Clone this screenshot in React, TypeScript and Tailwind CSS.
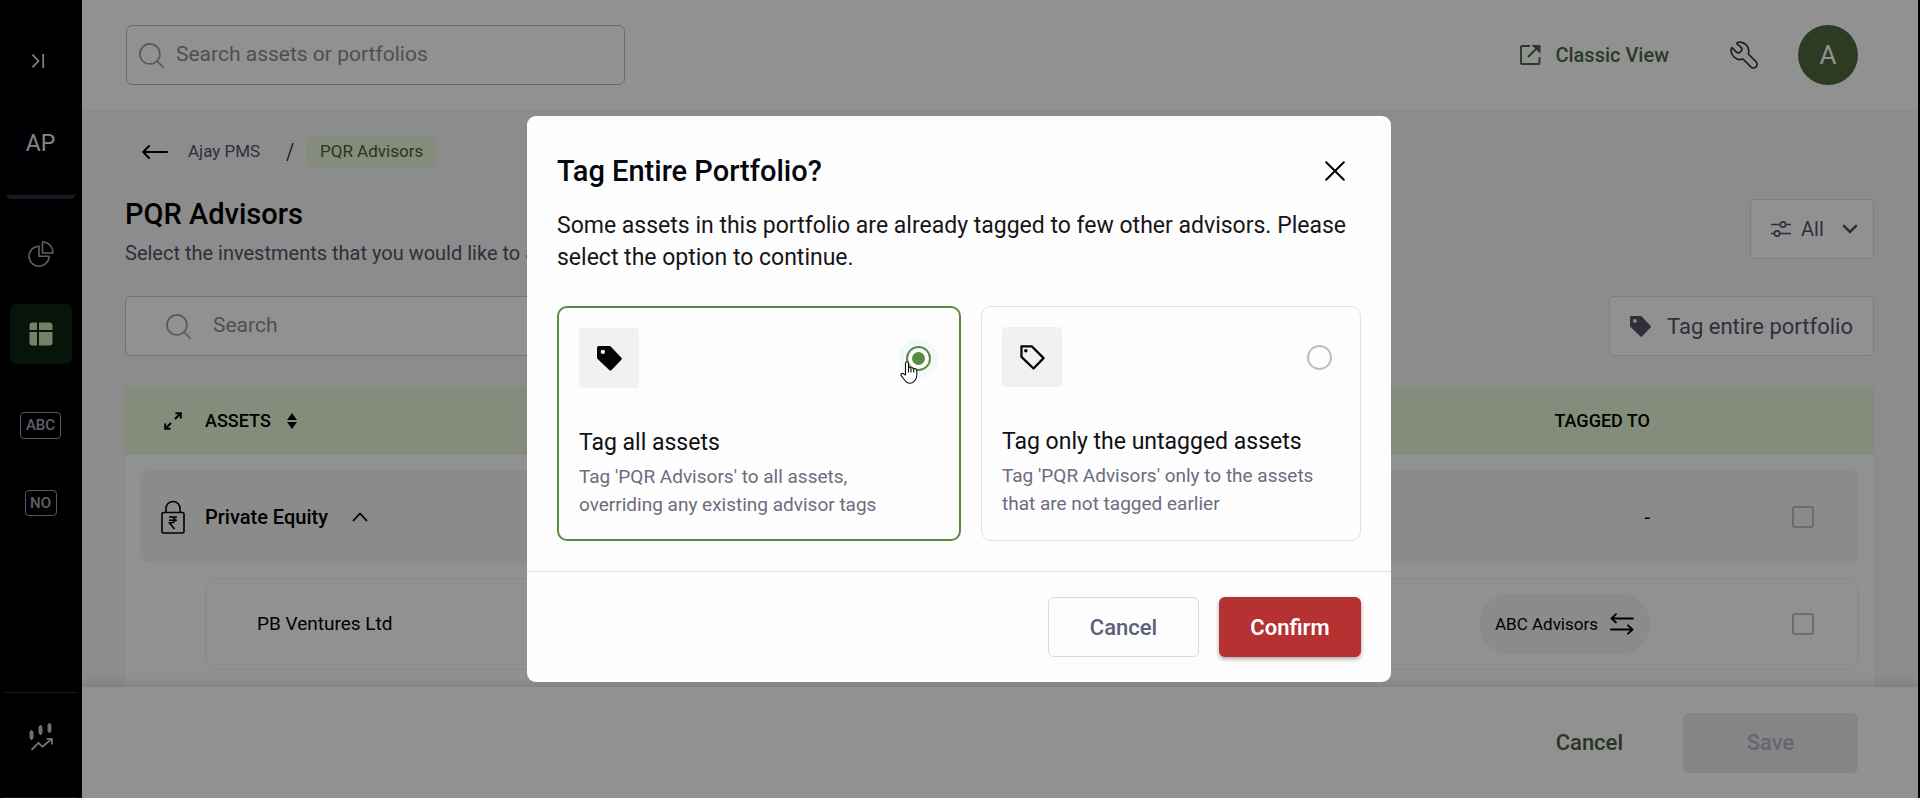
import React, { useState } from 'react';

type IconProps = { className?: string };

const SearchIcon: React.FC<IconProps> = ({ className }) => (
  <svg viewBox="0 0 24 24" className={className} fill="none" stroke="currentColor" strokeWidth="1.6" strokeLinecap="round">
    <circle cx="10.5" cy="10.5" r="9.6" />
    <path d="M17.5 17.5 23.2 23.2" />
  </svg>
);

const TagIcon: React.FC<IconProps & { filled?: boolean }> = ({ className, filled }) =>
  filled ? (
    <svg viewBox="0 0 24 24" className={className} fill="currentColor" fillRule="evenodd">
      <path d="M1.6 0H12q.8 0 1.4.6L23.4 11.2q.9 1 0 2L13.8 23.3q-.9.9-1.8 0L.6 12.5Q0 11.9 0 11.2V1.6Q0 0 1.6 0ZM5.6 3.5a2.1 2.1 0 1 0 0 4.2 2.1 2.1 0 0 0 0-4.2Z" />
    </svg>
  ) : (
    <svg viewBox="0 0 24 24" className={className} fill="none" stroke="currentColor" strokeWidth="2.2" strokeLinejoin="round">
      <path d="M1.4 1.4H11.5L22.6 12.6 13 22.6 1.4 11.4Z" />
      <circle cx="5.6" cy="5.6" r="1.7" fill="currentColor" stroke="none" />
    </svg>
  );

const PieIcon = () => (
  <svg viewBox="0 0 26 26" className="size-[26px]" fill="none" stroke="currentColor" strokeWidth="1.6" strokeLinejoin="round">
    <path d="M11 5.2A10 10 0 1 0 21 15.2H11Z" />
    <path d="M14.5 1A10.5 10.5 0 0 1 25 12H14.5Z" />
  </svg>
);

const GridIcon = () => (
  <svg viewBox="0 0 24 24" className="size-6" fill="currentColor">
    <path d="M3.5.5H8V8H.5V3.500a3 3 0 0 1 3-3ZM10 .5H20.500a3 3 0 0 1 3 3V8H10ZM.5 10H8V23.500H3.500a3 3 0 0 1-3-3ZM10 10H23.500V20.500a3 3 0 0 1-3 3H10Z" />
  </svg>
);

const CandlesIcon = () => (
  <svg viewBox="0 0 24 28" className="h-7 w-6" fill="none" stroke="currentColor">
    <path d="M2.5 9.500V14.500M11.500 4.500V9.500M20.500 2.500V7.500" strokeWidth="4" strokeLinecap="round" />
    <path d="M2.5 7V17M11.500 2V12M20.500 0V10" strokeWidth="1.2" />
    <path d="M2.5 27 9.500 19.800 13.500 23.800 22.500 16M17.500 15.800H22.900V21.500" strokeWidth="1.8" />
  </svg>
);

const CollapseIcon = () => (
  <svg viewBox="0 0 14 14" className="size-3.5" fill="none" stroke="currentColor" strokeWidth="1.7">
    <path d="M1.500.7 7.500 7 1.500 13.300M12.200 0V14" />
  </svg>
);

const OpenIcon = () => (
  <svg viewBox="0 0 22 22" className="size-[22px]" fill="none" stroke="currentColor" strokeWidth="1.9">
    <path d="M11 2H3Q2 2 2 3V19Q2 20 3 20H19.500Q20.500 20 20.500 19V13" />
    <path d="M9 13 18 4" />
    <path d="M12.500 1H21.500V10Z" fill="currentColor" stroke="none" />
  </svg>
);

const WrenchIcon = () => (
  <svg viewBox="0 0 28 28" className="size-7" fill="none" stroke="currentColor" strokeWidth="1.7" strokeLinejoin="round">
    <path d="M7.3 1.500A9 9 0 0 1 18.300 13L26 20.700a3.600 3.600 0 0 1-5.200 5.200L13 18A9 9 0 0 1 1.700 6.500L6.500 11.200Q8 12.300 9.500 11.500L11.500 9.700Q12.400 8 11.300 6.600L6.800 2.600Z" />
  </svg>
);

const SlidersIcon = () => (
  <svg viewBox="0 0 20 18" className="h-[18px] w-5" fill="none" stroke="currentColor" strokeWidth="1.7">
    <path d="M0 4.500H9M15 4.500H20M0 13.500H3M9 13.500H20" />
    <circle cx="12" cy="4.500" r="2.700" />
    <circle cx="6" cy="13.500" r="2.700" />
  </svg>
);

const ExpandIcon = () => (
  <svg viewBox="0 0 18 18" className="size-[18px]" fill="none" stroke="currentColor" strokeWidth="2">
    <path d="M11 7 16.500 1.500M11.500 1.200H16.800V6.500M7 11 1.500 16.500M1.200 11.500V16.800H6.500" />
  </svg>
);

const LockIcon = () => (
  <svg viewBox="0 0 24 34" className="h-[34px] w-6" fill="none" stroke="currentColor" strokeWidth="1.6">
    <rect x="1" y="12.500" width="22" height="20.500" rx="1.500" />
    <path d="M5 12.500V8.500a7 7 0 0 1 14 0V12.500" />
    <path d="M8 17H16M8 20.300H16M8 17H10.500Q13.800 17.200 13.800 20Q13.800 23 8.500 23L13.500 29" />
  </svg>
);

const SwapIcon = () => (
  <svg viewBox="0 0 24 22" className="h-[22px] w-6" fill="none" stroke="currentColor" strokeWidth="1.8" strokeLinecap="round" strokeLinejoin="round">
    <path d="M23 5.500H1.500M6 1.200 1.500 5.500 6 9.500M1 16.500H22.500M18 12.300 22.500 16.500 18 20.700" />
  </svg>
);

const HandCursor = () => (
  <svg viewBox="0 0 18 23" className="h-[23px] w-[18px]" fill="white" stroke="#111" strokeWidth="1.1" strokeLinejoin="round">
    <path d="M5.500 2.200a1.500 1.500 0 0 1 3 0V7.500Q9.200 5.800 11 7Q12.300 6.300 13.500 7.800Q15.300 7.200 16.800 9V14Q16.800 17.500 14.800 19.500Q13 22.300 9.500 22.300Q6.300 22 5 19.500L1 14.300Q.6 12.300 2.500 12.300L5.500 14Z" />
    <path d="M8.500 7.500V11.500M11 7.500V11.500M13.700 8V11.500" fill="none" />
  </svg>
);

const Sidebar = () => (
  <aside className="flex w-[82px] shrink-0 flex-col items-center bg-black pr-px text-[#e8e8f0]">
    <button aria-label="Expand menu" className="flex h-[110px] items-center pt-3 pr-1.5">
      <CollapseIcon />
    </button>
    <button className="h-[89px] w-[70px] rounded-md border-b-4 border-[#2e2b3d] bg-[#030308] pb-4 text-[23px]">AP</button>
    <nav className="mt-[25px] flex flex-col items-center">
      <a href="#overview" aria-label="Overview" className="flex h-[60px] w-[62px] items-center justify-center text-[#a8a8b4]">
        <PieIcon />
      </a>
      <a href="#assets" aria-label="Assets" className="mt-5 flex h-[60px] w-[62px] items-center justify-center rounded-md bg-[#0b2410] text-[#d0e3bb]">
        <GridIcon />
      </a>
      <a href="#abc" className="mt-12 flex h-[27px] w-[41px] items-center justify-center rounded border border-[#9a9aa8] text-[15px] font-medium text-[#a9a9bc]">
        ABC
      </a>
      <a href="#no" className="mt-[51px] flex h-[26px] w-8 items-center justify-center rounded border border-[#9a9aa8] text-[15px] font-medium text-[#a9a9bc]">
        NO
      </a>
    </nav>
    <div className="mt-auto flex h-[106px] w-[74px] items-start justify-center border-t border-b border-[#2a2a36] pt-[30px] text-[#c4c4cc]">
      <CandlesIcon />
    </div>
  </aside>
);

const TopBar = () => (
  <header className="flex h-[110px] shrink-0 items-center justify-between bg-white pr-[60px] pl-11">
    <label className="flex h-[60px] w-[499px] items-center gap-3 rounded-md border border-[#b9b9c4] px-3">
      <SearchIcon className="size-[25px] shrink-0 text-[#9c9cb0]" />
      <input aria-label="Search assets or portfolios" placeholder="Search assets or portfolios" className="w-full bg-transparent text-[21px] outline-none placeholder:text-[#8c8c8c]" />
    </label>
    <div className="flex items-center">
      <a href="#classic" className="flex items-center gap-3.5 text-xl font-medium text-[#4a6741]">
        <OpenIcon />
        Classic View
      </a>
      <button aria-label="Tools" className="ml-[61px] text-[#33333f]">
        <WrenchIcon />
      </button>
      <button aria-label="Account" className="ml-10 size-[60px] rounded-full bg-[#51683f] text-[26px] text-white">A</button>
    </div>
  </header>
);

const Checkbox: React.FC<{ label: string }> = ({ label }) => (
  <input type="checkbox" aria-label={label} className="size-[22px] appearance-none rounded-[3px] border-2 border-[#bcbccb] checked:bg-[#5b8a45]" />
);

const AssetTable = () => (
  <div className="mt-[30px] bg-white pb-10">
    <table className="w-full table-fixed border-separate border-spacing-0 text-left text-lg text-black">
      <colgroup>
        <col className="w-20" />
        <col />
        <col className="w-[400px]" />
        <col className="w-[224px]" />
      </colgroup>
      <thead>
        <tr className="h-[69px] bg-[#e9f7d8]">
          <th className="pl-[39px]">
            <button aria-label="Expand all" className="block"><ExpandIcon /></button>
          </th>
          <th className="font-medium">
            <button className="flex items-center gap-4">
              ASSETS
              <svg viewBox="0 0 10 16" className="h-4 w-2.5" fill="currentColor">
                <path d="M5 0 10 7H0ZM5 16 0 9H10Z" />
              </svg>
            </button>
          </th>
          <th className="text-right font-medium">TAGGED TO</th>
          <th aria-label="Select" />
        </tr>
      </thead>
      <tbody>
        <tr>
          <td className="pt-[15px] pl-[15px]">
            <div className="flex h-[93px] items-center rounded-l-[10px] bg-[#f4f4f4] pl-[21px]"><LockIcon /></div>
          </td>
          <td className="pt-[15px]">
            <div className="flex h-[93px] items-center gap-6 bg-[#f4f4f4] text-xl font-medium">
              Private Equity
              <button aria-label="Collapse Private Equity">
                <svg viewBox="0 0 16 10" className="h-2.5 w-4" fill="none" stroke="currentColor" strokeWidth="1.8">
                  <path d="M1 9 8 1.500 15 9" />
                </svg>
              </button>
            </div>
          </td>
          <td className="pt-[15px]">
            <div className="flex h-[93px] items-center justify-end bg-[#f4f4f4] text-xl">-</div>
          </td>
          <td className="pt-[15px] pr-[15px]">
            <div className="flex h-[93px] items-center justify-end rounded-r-[10px] bg-[#f4f4f4] pr-[45px]"><Checkbox label="Private Equity" /></div>
          </td>
        </tr>
        <tr>
          <td />
          <td className="pt-[15px]">
            <div className="flex h-[92px] items-center rounded-l-[18px] border-y border-l border-[#efefef] pl-[51px] text-[19px]">PB Ventures Ltd</div>
          </td>
          <td className="pt-[15px]">
            <div className="flex h-[92px] items-center justify-end border-y border-[#efefef]">
              <button className="flex h-[60px] items-center gap-3 rounded-full bg-[#f4f4f4] px-4 text-[17px]">
                ABC Advisors
                <SwapIcon />
              </button>
            </div>
          </td>
          <td className="pt-[15px] pr-[15px]">
            <div className="flex h-[92px] items-center justify-end rounded-r-[18px] border-y border-r border-[#efefef] pr-11"><Checkbox label="PB Ventures Ltd" /></div>
          </td>
        </tr>
      </tbody>
    </table>
  </div>
);

const Portfolio = () => (
  <section className="min-h-0 flex-1 overflow-hidden bg-[#f6f6f6] pt-[27px] pr-11 pl-[43px]">
    <nav aria-label="Breadcrumb" className="flex h-[30px] items-center text-[17px] text-[#54546a]">
      <a href="#back" aria-label="Back" className="ml-[17px] text-black">
        <svg viewBox="0 0 26 14" className="h-3.5 w-[26px]" fill="none" stroke="currentColor" strokeWidth="2" strokeLinecap="round" strokeLinejoin="round">
          <path d="M25 7H1.500M7 1 1.200 7 7 13" />
        </svg>
      </a>
      <a href="#ajay" className="ml-5 w-[98px]">Ajay PMS</a>
      <svg viewBox="0 0 8 18" className="h-[18px] w-2" stroke="#3c3c48" strokeWidth="1.5"><path d="M7 0 1 18" /></svg>
      <a href="#pqr" className="ml-3 flex h-[30px] items-center rounded bg-[#e9f7d8] px-3.5 text-[#4c5c3f]">PQR Advisors</a>
    </nav>

    <div className="mt-[31px] flex items-start justify-between">
      <div>
        <h1 className="text-[29px] leading-8 font-medium text-black">PQR Advisors</h1>
        <p className="mt-[11px] text-xl leading-6 text-[#54546a]">Select the investments that you would like to add</p>
      </div>
      <button className="mt-px flex h-[60px] w-[124px] items-center rounded border border-[#dcdce4] bg-white pl-5 text-xl text-[#54546a]">
        <SlidersIcon />
        <span className="ml-2.5 flex-1 text-left">All</span>
        <svg viewBox="0 0 16 10" className="mr-[15px] h-2.5 w-4" fill="none" stroke="currentColor" strokeWidth="2.5">
          <path d="M1.200 1.200 8 8 14.800 1.200" />
        </svg>
      </button>
    </div>

    <div className="mt-[31px] flex items-center justify-between">
      <label className="flex h-[60px] w-[500px] items-center gap-[22px] rounded-md border border-[#c9c9d2] bg-white pr-3 pl-10">
        <SearchIcon className="size-[25px] shrink-0 text-[#9c9cb0]" />
        <input aria-label="Search" placeholder="Search" className="w-full bg-transparent text-[21px] outline-none placeholder:text-[#8c8c8c]" />
      </label>
      <button className="flex h-[60px] items-center gap-4 rounded border border-[#dcdce4] bg-white px-5 text-[22px] text-[#54546a]">
        <TagIcon filled className="size-[21px]" />
        Tag entire portfolio
      </button>
    </div>

    <AssetTable />
  </section>
);

const options = [
  { id: 'all', title: 'Tag all assets', text: "Tag 'PQR Advisors' to all assets, overriding any existing advisor tags", filled: true },
  { id: 'untagged', title: 'Tag only the untagged assets', text: "Tag 'PQR Advisors' only to the assets that are not tagged earlier", filled: false },
];

const TagDialog = () => {
  const [selected, setSelected] = useState('all');

  return (
    <div className="fixed inset-0 flex items-center justify-center bg-black/43 pr-0.5">
      <div role="dialog" aria-modal="true" aria-labelledby="dialog-title" className="w-[864px] rounded-[9px] bg-[#fdfdfd]">
        <div className="px-[30px] pt-[37px] pb-[30px]">
          <div className="flex items-center justify-between pr-4">
            <h2 id="dialog-title" className="text-[29px] leading-9 font-medium text-[#06060e]">Tag Entire Portfolio?</h2>
            <button aria-label="Close" className="text-black">
              <svg viewBox="0 0 20 20" className="size-5" stroke="currentColor" strokeWidth="2" strokeLinecap="round">
                <path d="M1.200 1.200 18.800 18.800M18.800 1.200 1.200 18.800" />
              </svg>
            </button>
          </div>
          <p className="mt-[21px] text-[23px] leading-8 text-[#161618]">
            Some assets in this portfolio are already tagged to few other advisors. Please select the option to continue.
          </p>

          <div className="mt-8 grid grid-cols-[404fr_380fr] gap-5">
            {options.map((option) => {
              const isSelected = selected === option.id;
              return (
                <label
                  key={option.id}
                  className={`block rounded-[10px] p-5 ${isSelected ? 'border-2 border-[#5b8a45]' : 'border border-[#dfdfe7]'}`}
                >
                  <span className="flex items-center justify-between">
                    <span className="flex size-[60px] items-center justify-center rounded bg-[#f1f1f1] text-[#050509]">
                      <TagIcon filled={option.filled} className="size-[25px]" />
                    </span>
                    <span className="relative mr-2 flex">
                      <input
                        type="radio"
                        name="tag-mode"
                        checked={isSelected}
                        onChange={() => setSelected(option.id)}
                        className="flex size-[25px] appearance-none items-center justify-center rounded-full border-2 border-[#bcbccb] checked:border-[#5b8a45] checked:shadow-[0_0_0_7px_#f1f8f9] checked:before:size-[13px] checked:before:rounded-full checked:before:bg-[#5b8a45]"
                      />
                      {isSelected && (
                        <span className="pointer-events-none absolute top-[15px] -left-1.5"><HandCursor /></span>
                      )}
                    </span>
                  </span>
                  <span className="mt-[41px] block text-[23px] leading-7 text-[#101014]">{option.title}</span>
                  <span className="mt-1.5 block pr-3 text-[19px] leading-7 text-[#6e6b80]">{option.text}</span>
                </label>
              );
            })}
          </div>
        </div>
        <div className="flex justify-end gap-5 border-t border-[#dfdfe7] px-[30px] py-[25px]">
          <button className="h-[60px] w-[151px] rounded-md border border-[#d8dae2] text-[22px] font-medium text-[#5b6078]">Cancel</button>
          <button className="h-[60px] w-[142px] rounded-md bg-[#b53132] text-[22px] font-semibold text-white shadow-[0_2px_4px_rgba(0,0,0,0.35)]">Confirm</button>
        </div>
      </div>
    </div>
  );
};

export default function App() {
  return (
    <div className="flex h-screen border-r-2 border-black font-['Roboto',sans-serif]">
      <Sidebar />
      <main className="flex min-w-0 flex-1 flex-col">
        <TopBar />
        <Portfolio />
        <footer className="relative flex h-[111px] shrink-0 items-center justify-end gap-[60px] bg-white pr-[60px] text-[22px] font-medium shadow-[0_-3px_10px_rgba(0,0,0,0.12)]">
          <button className="text-[#4a5c40]">Cancel</button>
          <button disabled className="h-[60px] w-[175px] rounded-md bg-[#e8eaed] text-[#b4b6c2]">Save</button>
        </footer>
      </main>
      <TagDialog />
    </div>
  );
}
